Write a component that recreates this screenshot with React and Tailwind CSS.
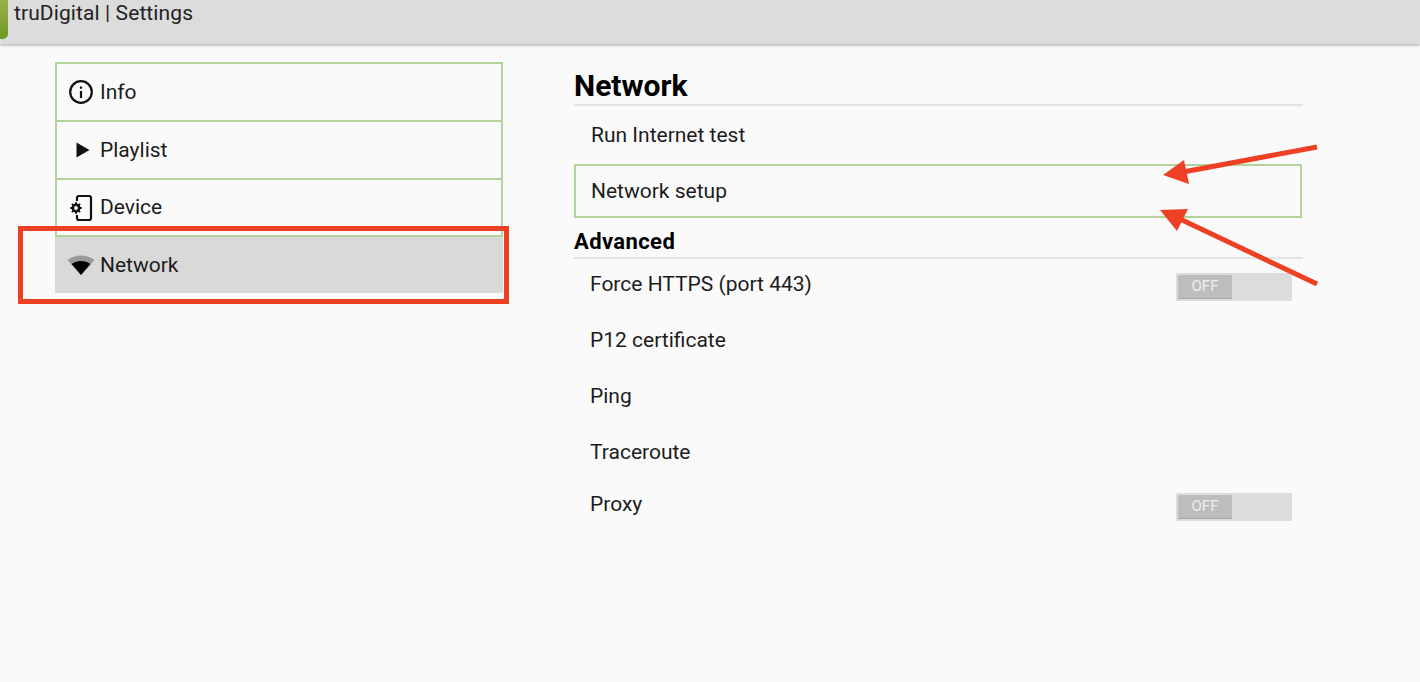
import React from 'react';

const font = { fontFamily: 'Roboto, sans-serif' };

function InfoIcon() {
  return (
    <svg width="26" height="26" viewBox="0 0 26 26" fill="none" stroke="#111" strokeWidth="2.200">
      <circle cx="13" cy="13" r="10.800" />
      <path d="M13 12v7" />
      <path d="M13 7.500v2.200" />
    </svg>
  );
}

function PlayIcon() {
  return (
    <svg width="24" height="24" viewBox="0 0 24 24" fill="#111">
      <path d="M7.500 4.500v15l13-7.500z" />
    </svg>
  );
}

function DeviceIcon() {
  return (
    <svg width="26" height="28" viewBox="0 0 26 28" fill="none">
      <path d="M9 7V4a2 2 0 0 1 2-2h10a2 2 0 0 1 2 2v20a2 2 0 0 1-2 2H11a2 2 0 0 1-2-2v-3" stroke="#111" strokeWidth="2.200" />
      <circle cx="8" cy="14" r="3.200" stroke="#111" strokeWidth="2.600" />
      <path d="M8 8.300v2M8 17.700v2M2.300 14h2M11.700 14h2M4 10l1.400 1.400M10.600 16.600l1.400 1.400M4 18l1.400-1.400M10.600 11.400L12 10" stroke="#111" strokeWidth="2" />
    </svg>
  );
}

function WifiIcon() {
  return (
    <svg width="28" height="24" viewBox="0 0 28 24">
      <path d="M0.500 7C8 1 20 1 27.500 7L14 22z" fill="#9a9a9a" />
      <path d="M4.500 11C10 7 18 7 23.500 11L14 22z" fill="#000" />
    </svg>
  );
}

function Toggle({ className }) {
  return (
    <div className={`w-[116px] h-[28px] bg-[#dcdcdc] p-[2px] ${className}`}>
      <div className="w-[54px] h-full bg-[#bdbdbd] rounded-[1px] border-b border-[#a8a8a8] flex items-center justify-center text-[15px] text-[#eeeeee]">OFF</div>
    </div>
  );
}

function SideItem({ icon, label, active, className }) {
  return (
    <div className={active
      ? 'h-[58px] flex items-center bg-[#d9d9d9] border-t-2 border-[#b2d49a] pl-[2px]'
      : `-mb-[2px] flex items-center border-2 border-[#b2d49a] ${className}`}>
      <div className="w-[43px] flex justify-center shrink-0 pl-[5px]">{icon}</div>
      <span className="text-[21px] leading-none text-[#1c1c1c]">{label}</span>
    </div>
  );
}

function Row({ label, toggle, toggleClass, className }) {
  return (
    <div className={`flex items-center justify-between pr-[11px] text-[21px] leading-none text-[#1c1c1c] ${className}`}>
      <span>{label}</span>
      {toggle && <Toggle className={toggleClass} />}
    </div>
  );
}

export default function App() {
  return (
    <div className="relative h-[682px] overflow-hidden bg-[#fafafa]" style={font}>
      <header className="h-[44px] bg-[#dcdcdc] shadow-[0_1px_3px_rgba(0,0,0,0.35)] flex items-start">
        <div className="w-[8px] h-[39px] bg-gradient-to-b from-[#9ab04a] to-[#6f9a1e] rounded-br-[5px]" />
        <span className="ml-[6px] mt-[1px] text-[21px] tracking-[0.1px] leading-[24px] text-[#222]">truDigital | Settings</span>
      </header>

      <div className="flex pt-[18px]">
        <nav className="ml-[55px] w-[448px] shrink-0">
          <SideItem icon={<InfoIcon />} label="Info" className="h-[60px]" />
          <SideItem icon={<PlayIcon />} label="Playlist" className="h-[60px]" />
          <SideItem icon={<DeviceIcon />} label="Device" className="h-[59px]" />
          <SideItem icon={<WifiIcon />} label="Network" active />
        </nav>

        <main className="ml-[71px] w-[729px]">
          <h1 className="h-[44px] pt-[7px] text-[30px] leading-[34px] font-bold text-black border-b-2 border-[#e4e4e4]">Network</h1>
          <Row label="Run Internet test" className="h-[58px] pl-[17px] pt-[1px]" />
          <Row label="Network setup" className="h-[54px] w-[728px] border-2 border-[#b2d49a] pl-[15px]" />
          <h2 className="h-[41px] pt-[12px] text-[22px] tracking-[0.4px] leading-[24px] font-bold text-black border-b-2 border-[#e4e4e4]">Advanced</h2>
          <Row label="Force HTTPS (port 443)" toggle toggleClass="mt-[4px]" className="h-[53px] pl-[16px] pb-[2px]" />
          <Row label="P12 certificate" className="h-[56px] pl-[16px]" />
          <Row label="Ping" className="h-[56px] pl-[16px]" />
          <Row label="Traceroute" className="h-[56px] pl-[16px]" />
          <Row label="Proxy" toggle toggleClass="mt-[6px]" className="h-[50px] pl-[16px] pb-[2px]" />
        </main>
      </div>

      {/* annotations drawn on top of the screenshot */}
      <div className="absolute left-[18px] top-[226px] w-[491px] h-[78px] border-[5px] border-[#ee4023]" />
      <svg className="absolute inset-0 pointer-events-none" width="1420" height="682" viewBox="0 0 1420 682">
        <path d="M1317 147L1183 172" stroke="#ee4023" strokeWidth="5" />
        <path d="M1163 175L1184 160L1189 184z" fill="#ee4023" />
        <path d="M1317 284L1180 219" stroke="#ee4023" strokeWidth="5" />
        <path d="M1160 210L1188 209L1177 231z" fill="#ee4023" />
      </svg>
    </div>
  );
}
